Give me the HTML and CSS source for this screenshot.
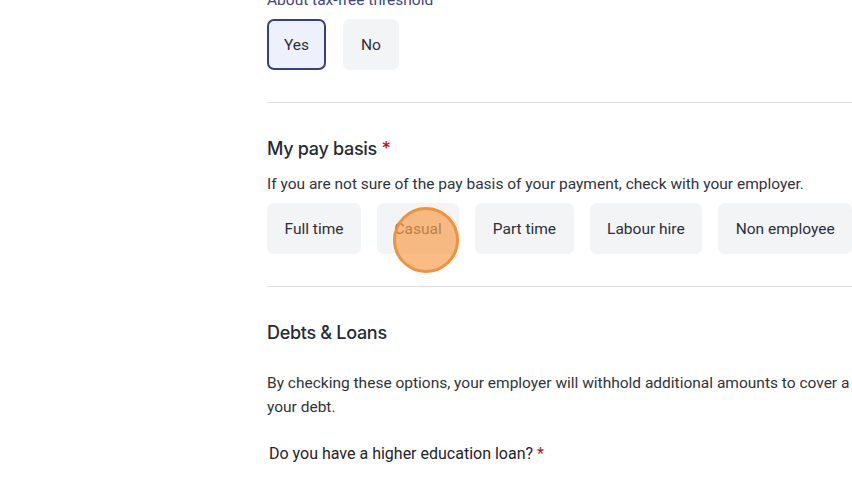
FILE: index.html
```html
<!DOCTYPE html>
<html>
<head>
<meta charset="utf-8">
<link rel="stylesheet" href="styles.css">
</head>
<body>
<div class="page">
  <div class="label-top">About tax-free threshold</div>
  <div class="choices first">
    <button class="choice selected">Yes</button>
    <button class="choice">No</button>
  </div>
  <hr class="divider">
  <h2 class="heading">My pay basis <span class="req">*</span></h2>
  <p class="hint">If you are not sure of the pay basis of your payment, check with your employer.</p>
  <div class="choices pay">
    <button class="choice">Full time</button>
    <button class="choice casual">Casual<span class="tap"></span></button>
    <button class="choice">Part time</button>
    <button class="choice">Labour hire</button>
    <button class="choice">Non employee</button>
  </div>
  <hr class="divider">
  <h2 class="heading debts">Debts &amp; Loans</h2>
  <p class="para">By checking these options, your employer will withhold additional amounts to cover a portion of your debt.</p>
  <p class="question">Do you have a higher education loan? <span class="req">*</span></p>
</div>
</body>
</html>
```
FILE: styles.css
```css
html, body {
  margin: 0;
  padding: 0;
  background: #ffffff;
  overflow: hidden;
  width: 852px;
  height: 477px;
}
body {
  font-family: Roboto, "Liberation Sans", sans-serif;
  color: #2b3038;
}
.page {
  padding-left: 267px;
  width: 670px;
}
.label-top {
  margin-top: -10px;
  font-size: 15.5px;
  line-height: 20px;
  color: #3d4684;
}
.choices {
  display: flex;
  gap: 16.5px;
  margin-top: 9px;
  flex-wrap: nowrap;
}
.choices.first {
  margin-top: 9px;
}
.choice {
  position: relative;
  font-family: Roboto, "Liberation Sans", sans-serif;
  font-size: 15.5px;
  color: #2b3038;
  background: #f3f4f6;
  border: 2px solid transparent;
  border-radius: 7px;
  height: 51px;
  padding: 0 16.5px;
  white-space: nowrap;
  flex: none;
}
.choices.pay {
  gap: 16px;
}
.choices.pay .choice {
  padding: 0 15.5px;
}
.choice.selected {
  background: #eef0fb;
  border-color: #3b4177;
  padding: 0 15px;
}
.divider {
  border: 0;
  border-top: 1px solid #dcdfe3;
  margin: 32px 0 0 0;
  height: 0;
}
.heading {
  margin: 32px 0 0 0;
  font-family: Inter, Roboto, sans-serif;
  font-weight: 500;
  font-size: 18px;
  line-height: 28px;
  color: #262b33;
  letter-spacing: -0.3px;
}
.req {
  color: #b3161c;
}
.hint {
  margin: 11px 0 0 0;
  font-size: 15.5px;
  line-height: 20px;
  color: #2f343c;
}
.para {
  margin: 24px 0 0 0;
  font-size: 15.5px;
  line-height: 24px;
  color: #2f343c;
}
.question {
  margin: 23px 0 0 2px;
  font-size: 16px;
  line-height: 24px;
  font-weight: 400;
  color: #1f242b;
}
.tap {
  position: absolute;
  left: 14px;
  top: 2px;
  width: 60px;
  height: 60px;
  border-radius: 50%;
  border: 3px solid #f0923a;
  background: rgba(246, 160, 80, 0.7);
}
```
